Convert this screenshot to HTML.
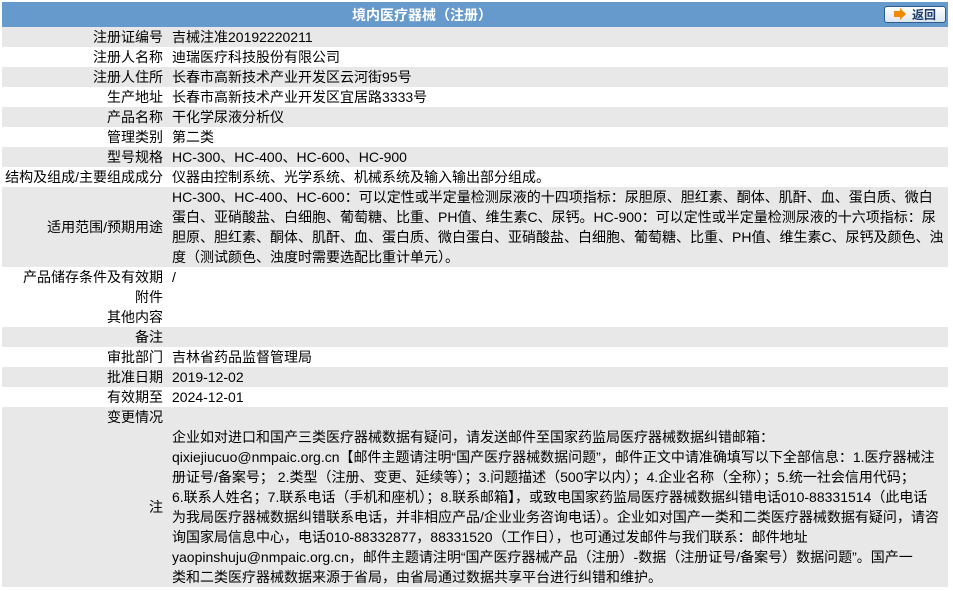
<!DOCTYPE html>
<html><head><meta charset="utf-8"><style>
body{margin:0;background:#fff;font-family:"Liberation Sans","Noto Sans CJK SC",sans-serif;font-size:14px;color:#000}
.wrap{position:absolute;left:2px;top:2px;width:946px}
.hd{height:25px;background:#6699cc;position:relative}
.hd .t{position:absolute;left:0;width:840px;text-align:center;top:3px;color:#fff;font-weight:bold;font-size:14px}
.btn{position:absolute;left:882px;top:4px;width:62px;height:17px;border:1px solid #2d5c8f;border-radius:3px;background:linear-gradient(#fff,#dde6f0);font-weight:bold;font-size:12px;color:#1a3a6a;box-sizing:border-box}
.btn .a{position:absolute;left:9px;top:4px;width:6px;height:6px;background:#f08a00;}
.btn .a:after{content:"";position:absolute;left:6px;top:-3px;border-left:6px solid #f08a00;border-top:6px solid transparent;border-bottom:6px solid transparent}
.btn .x{position:absolute;left:27px;top:0px;line-height:16px}
table{border-collapse:collapse;width:946px}
td{padding:0;height:20px;line-height:20px;vertical-align:middle;white-space:nowrap}
td.l{width:161px;text-align:right;padding-right:9px}
td.v{padding-left:0}
tr.g td{background:#e8e8e8}
</style></head><body><div class="wrap">
<div class="hd"><div class="t">境内医疗器械（注册）</div><div class="btn"><span class="a"></span><span class="x">返回</span></div></div>
<table>
<tr class="g"><td class="l">注册证编号</td><td class="v">吉械注准20192220211</td></tr>
<tr><td class="l">注册人名称</td><td class="v">迪瑞医疗科技股份有限公司</td></tr>
<tr class="g"><td class="l">注册人住所</td><td class="v">长春市高新技术产业开发区云河街95号</td></tr>
<tr><td class="l">生产地址</td><td class="v">长春市高新技术产业开发区宜居路3333号</td></tr>
<tr class="g"><td class="l">产品名称</td><td class="v">干化学尿液分析仪</td></tr>
<tr><td class="l">管理类别</td><td class="v">第二类</td></tr>
<tr class="g"><td class="l">型号规格</td><td class="v">HC-300、HC-400、HC-600、HC-900</td></tr>
<tr><td class="l" style="padding-right:9px">结构及组成/主要组成成分</td><td class="v">仪器由控制系统、光学系统、机械系统及输入输出部分组成。</td></tr>
<tr class="g"><td class="l">适用范围/预期用途</td><td class="v">HC-300、HC-400、HC-600：可以定性或半定量检测尿液的十四项指标：尿胆原、胆红素、酮体、肌酐、血、蛋白质、微白<br>蛋白、亚硝酸盐、白细胞、葡萄糖、比重、PH值、维生素C、尿钙。HC-900：可以定性或半定量检测尿液的十六项指标：尿<br>胆原、胆红素、酮体、肌酐、血、蛋白质、微白蛋白、亚硝酸盐、白细胞、葡萄糖、比重、PH值、维生素C、尿钙及颜色、浊<br>度（测试颜色、浊度时需要选配比重计单元）。</td></tr>
<tr><td class="l">产品储存条件及有效期</td><td class="v">/</td></tr>
<tr><td class="l">附件</td><td class="v"></td></tr>
<tr><td class="l">其他内容</td><td class="v"></td></tr>
<tr class="g"><td class="l">备注</td><td class="v"></td></tr>
<tr><td class="l">审批部门</td><td class="v">吉林省药品监督管理局</td></tr>
<tr class="g"><td class="l">批准日期</td><td class="v">2019-12-02</td></tr>
<tr><td class="l">有效期至</td><td class="v">2024-12-01</td></tr>
<tr class="g"><td class="l">变更情况</td><td class="v"></td></tr>
<tr class="g"><td class="l">注</td><td class="v">企业如对进口和国产三类医疗器械数据有疑问，请发送邮件至国家药监局医疗器械数据纠错邮箱：<br>qixiejiucuo@nmpaic.org.cn【邮件主题请注明“国产医疗器械数据问题”，邮件正文中请准确填写以下全部信息：1.医疗器械注<br>册证号/备案号； 2.类型（注册、变更、延续等）；3.问题描述（500字以内）；4.企业名称（全称）；5.统一社会信用代码；<br>6.联系人姓名；7.联系电话（手机和座机）；8.联系邮箱】，或致电国家药监局医疗器械数据纠错电话010-88331514（此电话<br>为我局医疗器械数据纠错联系电话，并非相应产品/企业业务咨询电话）。企业如对国产一类和二类医疗器械数据有疑问，请咨<br>询国家局信息中心，电话010-88332877，88331520（工作日），也可通过发邮件与我们联系：邮件地址<br>yaopinshuju@nmpaic.org.cn，邮件主题请注明“国产医疗器械产品（注册）-数据（注册证号/备案号）数据问题”。国产一<br>类和二类医疗器械数据来源于省局，由省局通过数据共享平台进行纠错和维护。</td></tr>
</table></div></body></html>
